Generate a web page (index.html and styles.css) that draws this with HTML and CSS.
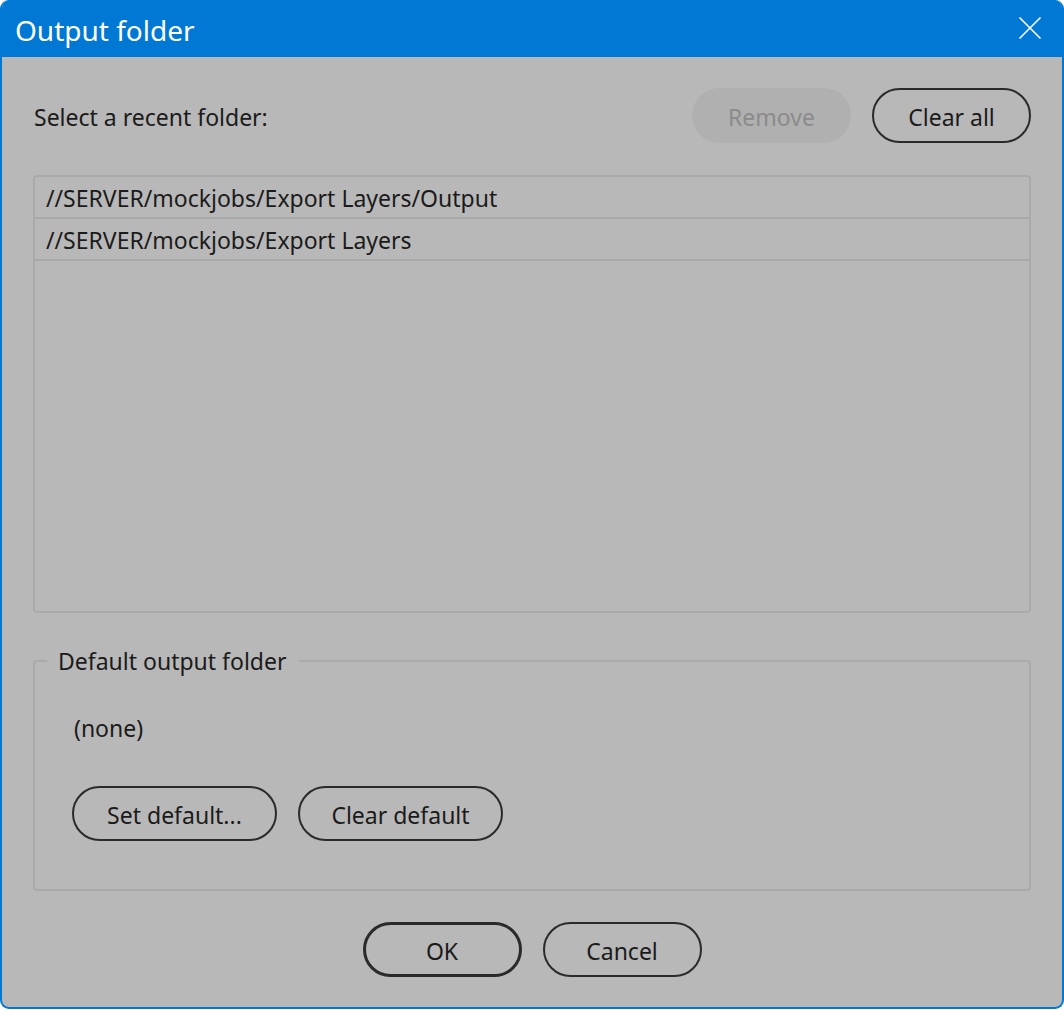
FILE: index.html
```html
<!DOCTYPE html>
<html lang="en">
<head>
<meta charset="utf-8">
<title>Output folder</title>
<link rel="stylesheet" href="styles.css">
</head>
<body>
<div class="window">
  <div class="titlebar">
    <span class="title">Output folder</span>
    <button class="close" aria-label="Close">
      <svg width="24" height="24" viewBox="0 0 24 24"><path d="M1.5 1.5 L22.5 22.5 M22.5 1.5 L1.5 22.5" stroke="#fff" stroke-width="1.6" fill="none"/></svg>
    </button>
  </div>
  <div class="content">
    <div class="header-row">
      <span class="label">Select a recent folder:</span>
      <div class="header-buttons">
        <button class="btn disabled">Remove</button>
        <button class="btn">Clear all</button>
      </div>
    </div>
    <div class="list">
      <div class="row">//SERVER/mockjobs/Export Layers/Output</div>
      <div class="row">//SERVER/mockjobs/Export Layers</div>
    </div>
    <fieldset class="group">
      <legend>Default output folder</legend>
      <div class="group-body">
        <div class="none">(none)</div>
        <div class="group-buttons">
          <button class="btn wide">Set default...</button>
          <button class="btn wide">Clear default</button>
        </div>
      </div>
    </fieldset>
    <div class="footer">
      <button class="btn primary">OK</button>
      <button class="btn">Cancel</button>
    </div>
  </div>
</div>
</body>
</html>
```
FILE: styles.css
```css
* { box-sizing: border-box; }
html, body { margin: 0; padding: 0; background: #ffffff; }
body {
  font-family: "Noto Sans", "Open Sans", "DejaVu Sans", sans-serif;
  color: #1b1b1b;
}
.window {
  width: 1064px;
  height: 1009px;
  border-radius: 9px;
  overflow: hidden;
  background: #b8b8b8;
  border: 2px solid #0078d4;
  border-top: none;
  display: flex;
  flex-direction: column;
}
.titlebar {
  height: 57px;
  background: #0078d4;
  display: flex;
  align-items: center;
  justify-content: space-between;
  padding: 0 22px 0 15px;
  margin: 0 -2px;
}
.title {
  color: #ffffff;
  font-size: 28px;
  line-height: 1;
  margin-top: 2px;
}
.close {
  background: none;
  border: none;
  padding: 0;
  width: 24px;
  height: 24px;
  display: flex;
  margin-top: -2px;
}
.content {
  flex: 1;
  padding: 31px 31px 0 31px;
  display: flex;
  flex-direction: column;
}
.header-row {
  display: flex;
  align-items: center;
  justify-content: space-between;
  height: 55px;
}
.label {
  font-size: 23px;
  padding-left: 1px;
  padding-top: 2px;
}
.header-buttons {
  display: flex;
  gap: 21px;
}
.btn {
  font-family: inherit;
  font-size: 23px;
  color: #1b1b1b;
  background: transparent;
  border: 2px solid #2a2a2a;
  border-radius: 28px;
  width: 159px;
  height: 55px;
  padding: 3px 0 0 0;
  display: flex;
  align-items: center;
  justify-content: center;
}
.btn.disabled {
  border-color: transparent;
  background: #b0b0b0;
  color: #8b8b8b;
}
.btn.wide { width: 205px; height: 55px; }
.btn.primary { border-width: 3.5px; }
.list {
  margin-top: 32px;
  height: 438px;
  border: 2px solid #aaaaaa;
  border-radius: 4px;
}
.row {
  height: 42px;
  border-bottom: 2px solid #aaaaaa;
  font-size: 23px;
  padding-left: 11px;
  padding-top: 2px;
  display: flex;
  align-items: center;
}
.group {
  margin: 34px 0 0 0;
  padding: 0;
  height: 244px;
  border: 2px solid #aaaaaa;
  border-radius: 4px;
  min-width: 0;
}
.group legend {
  font-size: 23px;
  margin-left: 12px;
  padding: 0 13px 0 11px;
  line-height: 28px;
}
.group-body {
  padding: 38px 0 0 37px;
}
.none {
  font-size: 23px;
  padding-left: 2px;
  line-height: 30px;
}
.group-buttons {
  display: flex;
  gap: 21px;
  margin-top: 43px;
}
.footer {
  margin-top: 31px;
  display: flex;
  justify-content: center;
  gap: 21px;
}
```
